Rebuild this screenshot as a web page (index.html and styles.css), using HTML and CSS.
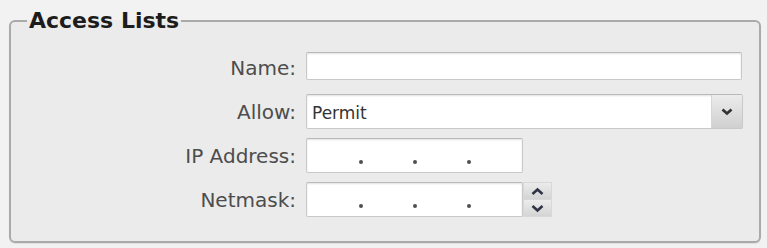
FILE: index.html
```html
<!DOCTYPE html>
<html lang="en">
<head>
    <meta charset="UTF-8">
    <meta name="viewport" content="width=device-width, initial-scale=1.0">
    <title>Access Lists</title>
    <link rel="stylesheet" href="styles.css">
</head>
<body>
    <div class="page">
        <fieldset class="panel">
            <legend>Access Lists</legend>
            <div class="form-row">
                <label for="name">Name:</label>
                <input type="text" id="name" class="text-input name-input">
            </div>
            <div class="form-row">
                <label for="allow">Allow:</label>
                <div class="select-box">
                    <select id="allow">
                        <option>Permit</option>
                        <option>Deny</option>
                    </select>
                    <span class="select-button">
                        <svg width="12" height="8" viewBox="0 0 12 8"><path d="M1.5 1.5 L6 5.5 L10.5 1.5" fill="none" stroke="#333" stroke-width="2.8"/></svg>
                    </span>
                </div>
            </div>
            <div class="form-row">
                <label>IP Address:</label>
                <div class="ip-field">
                    <input type="text" class="octet"><span class="dot"></span><input type="text" class="octet"><span class="dot"></span><input type="text" class="octet"><span class="dot"></span><input type="text" class="octet last">
                </div>
            </div>
            <div class="form-row">
                <label>Netmask:</label>
                <div class="ip-field">
                    <input type="text" class="octet"><span class="dot"></span><input type="text" class="octet"><span class="dot"></span><input type="text" class="octet"><span class="dot"></span><input type="text" class="octet last">
                </div>
                <div class="spinner">
                    <span class="spin-btn">
                        <svg width="13" height="9" viewBox="0 0 13 9"><path d="M1.5 7 L6.5 2.5 L11.5 7" fill="none" stroke="#2f3446" stroke-width="2.6"/></svg>
                    </span>
                    <span class="spin-btn">
                        <svg width="13" height="9" viewBox="0 0 13 9"><path d="M1.5 2 L6.5 6.5 L11.5 2" fill="none" stroke="#2f3446" stroke-width="2.6"/></svg>
                    </span>
                </div>
            </div>
        </fieldset>
    </div>
</body>
</html>
```

FILE: styles.css
```css
body {
    margin: 0;
    background: #f2f2f2;
    font-family: "DejaVu Sans", Verdana, sans-serif;
}

.page {
    padding: 7px 9px 5px 9px;
}

.panel {
    margin: 0;
    padding: 16px 16px 24px 16px;
    border: 2px solid #aaaaaa;
    border-radius: 6px;
    background: #ebebeb;
    box-shadow: 0 1px 1px rgba(0,0,0,0.08);
}

.panel legend {
    padding: 0 2px;
    font-size: 22px;
    line-height: 27px;
    font-weight: bold;
    color: #1c1c1c;
}

.form-row {
    display: flex;
    align-items: center;
    height: 35px;
    margin-bottom: 9px;
}

.form-row:last-child {
    margin-bottom: 0;
}

.form-row label {
    width: 269px;
    margin-right: 10px;
    text-align: right;
    font-size: 20px;
    color: #4d4d4d;
}

.text-input {
    box-sizing: border-box;
    height: 28px;
    border: 1px solid #c9c9c9;
    border-top-color: #b9b9b9;
    border-radius: 2px;
    background: #fff;
    box-shadow: inset 0 1px 2px rgba(0,0,0,0.12);
    outline: none;
}

.name-input {
    width: 436px;
    margin-top: -4px;
}

.select-box {
    display: flex;
    box-sizing: border-box;
    width: 437px;
    height: 35px;
    border: 1px solid #c9c9c9;
    border-top-color: #b9b9b9;
    border-radius: 2px;
    background: #fff;
    box-shadow: inset 0 1px 2px rgba(0,0,0,0.12);
}

.select-box select {
    flex: 1;
    appearance: none;
    -webkit-appearance: none;
    border: none;
    background: transparent;
    padding: 2px 0 0 5px;
    font-family: "DejaVu Sans", Verdana, sans-serif;
    font-size: 17px;
    color: #333;
    outline: none;
}

.select-button {
    display: flex;
    align-items: center;
    justify-content: center;
    width: 30px;
    border-left: 1px solid #d6d6d6;
    background: linear-gradient(#ececec, #d0d0d0);
}

.ip-field {
    display: flex;
    align-items: center;
    box-sizing: border-box;
    width: 217px;
    height: 35px;
    padding-left: 3px;
    border: 1px solid #c9c9c9;
    border-top-color: #b9b9b9;
    border-radius: 2px;
    background: #fff;
    box-shadow: inset 0 1px 2px rgba(0,0,0,0.12);
}

.octet {
    width: 48px;
    height: 100%;
    padding: 0;
    border: none;
    background: transparent;
    outline: none;
}

.octet.last {
    width: 50px;
}

.dot {
    width: 4px;
    height: 4px;
    margin: 13px 1px 0 1px;
    border-radius: 50%;
    background: #505050;
}

.spinner {
    display: flex;
    flex-direction: column;
    width: 29px;
    height: 35px;
}

.spin-btn {
    display: flex;
    flex: 1;
    align-items: center;
    justify-content: center;
    background: linear-gradient(#ececec, #d4d4d4);
    border: 1px solid #d8d8d8;
}

.spin-btn + .spin-btn {
    border-top: none;
}
```
